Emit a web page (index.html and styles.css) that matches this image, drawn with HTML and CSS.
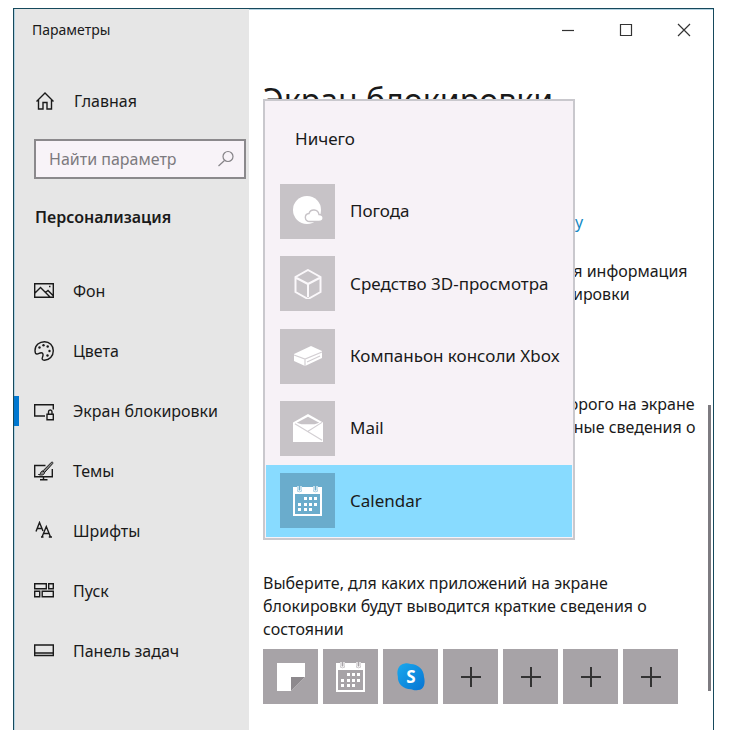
FILE: index.html
```html
<!DOCTYPE html>
<html lang="ru">
<head>
    <meta charset="UTF-8">
    <meta name="viewport" content="width=device-width, initial-scale=1.0">
    <title>Параметры</title>
    <link rel="stylesheet" href="styles.css">
</head>
<body>
    <div class="window">
        <aside class="sidebar">
            <div class="app-title">Параметры</div>

            <a class="home" href="#">
                <svg class="icon" viewBox="0 0 20 20"><path d="M1.500 10.500 10 2l8.500 8.500M3.500 9v9h4.500v-6.500h4V18h4.500V9"/></svg>
                Главная
            </a>

            <div class="search">
                <input type="text" aria-label="Найти параметр" placeholder="Найти параметр">
                <svg class="search-icon" viewBox="0 0 18 18"><circle cx="11" cy="6.500" r="5"/><path d="M7.500 10.500 1.500 16"/></svg>
            </div>

            <h2>Персонализация</h2>

            <nav class="menu">
                <a href="#">
                    <svg class="icon" viewBox="0 0 20 20"><path d="M.7 2.700h18.600v13.600H.7zM1 12l5.500-5.500 9.500 9.500M11.500 11.500l2.500-2 5 5"/><path d="M15 5.500h1.500"/></svg>
                    Фон
                </a>
                <a href="#">
                    <svg class="icon" viewBox="0 0 20 20"><path d="M1 9.500C1 4 5.500.7 10.500.7c5 0 8.800 4 8.800 9 0 5.500-4 9.500-8.800 9.500-2.500 0-2.700-1.500-2-3 .9-2 .8-4.500-1.200-4.500-2 0-2.500 1.300-4.300 1.300C1.500 13 1 11 1 9.500z"/><g class="dots"><circle cx="5.500" cy="6.500" r="1.200"/><circle cx="9.500" cy="4.200" r="1.200"/><circle cx="13.700" cy="5.500" r="1.200"/><circle cx="15.500" cy="10" r="1.200"/><circle cx="13.500" cy="14.500" r="1.200"/></g></svg>
                    Цвета
                </a>
                <a class="active" href="#">
                    <svg class="icon" viewBox="0 0 20 20"><path d="M11 15H.7V3.700h18.600V8.500M13 13.200h6.300v5.500H13zM14.500 13v-2.200c0-2.400 3.500-2.400 3.500 0V13"/></svg>
                    Экран блокировки
                </a>
                <a href="#">
                    <svg class="icon" viewBox="0 0 20 20"><path d="M11.500 4.500H.7v11.300h17.600V8M9.500 16v2.500M6 18.700h7.500"/><path class="brush" d="M17.500 1.200 9 9.800l1.600 1.700 8-8.800c.8-1-.2-2.200-1.100-1.500zM9 10c-2 0-2.500 1.500-2.500 2.700-.5.600-1.200.8-2 .8 2.500 1 6 .8 6-2z"/></svg>
                    Темы
                </a>
                <a href="#">
                    <svg class="icon" viewBox="0 0 20 20"><path d="M2 10.500 5.500 1.500 9 10M3.500 7.500h4M8 16l4.300-10.500L16.500 16M9.500 12.500h5.500M7 16h2.500M14.800 16H18"/></svg>
                    Шрифты
                </a>
                <a href="#">
                    <svg class="icon" viewBox="0 0 20 20"><path d="M.7 2.700h11.600v5H.7zM14.700 2.700h4.600v5h-4.600zM.7 10.200h5v5.500h-5zM8.200 10.200h11.100v5.500H8.200z"/></svg>
                    Пуск
                </a>
                <a href="#">
                    <svg class="icon" viewBox="0 0 20 20"><path d="M.7 4h18.600v10.500H.7zM.7 12h18.600"/></svg>
                    Панель задач
                </a>
            </nav>
        </aside>

        <main class="content">
            <div class="window-buttons">
                <button aria-label="Свернуть"><svg viewBox="0 0 14 14"><path d="M1 7.500h12"/></svg></button>
                <button aria-label="Развернуть"><svg viewBox="0 0 14 14"><path d="M1.500 1.500h11v11h-11z"/></svg></button>
                <button aria-label="Закрыть"><svg viewBox="0 0 14 14"><path d="m1 1 12 12M13 1 1 13"/></svg></button>
            </div>

            <div class="page">
                <h1>Экран блокировки</h1>
                <div class="notes">
                    <a class="link" href="#">фону</a>
                    <p class="hint">новая информация<br>блокировки</p>
                    <p class="detail">которого на экране<br>важные сведения о</p>
                </div>
                <p class="brief">Выберите, для каких приложений на экране блокировки будут выводится краткие сведения о состоянии</p>

                <div class="tiles">
                    <button class="tile" aria-label="Записки"><svg viewBox="0 0 30 30"><path class="solid" d="M1 1h28v14L15 29H1z"/><path class="fold" d="M15 15h14L15 29z"/></svg></button>
                    <button class="tile" aria-label="Календарь"><svg viewBox="0 0 30 30"><use href="#calendar"/></svg></button>
                    <button class="tile" aria-label="Skype">
                        <svg viewBox="0 0 30 30">
                            <defs><linearGradient id="sky" x1="0" y1="0" x2="1" y2="1"><stop offset="0" stop-color="#19a9ee"/><stop offset="1" stop-color="#0874d2"/></linearGradient></defs>
                            <path fill="url(#sky)" d="M9 1.500c2-.6 4 .2 5.500.5C22 2 28 7.500 28 15c1.500 5 .5 13-6 13-3 1-5-.5-7-.8C7 27 1.500 22 1.800 14.500.5 8 2.500 2.500 9 1.500z"/>
                            <text class="skype-letter" x="15" y="21">S</text>
                        </svg>
                    </button>
                    <button class="tile" aria-label="Добавить"><svg viewBox="0 0 30 30"><path class="plus" d="M5 15h20M15 5v20"/></svg></button>
                    <button class="tile" aria-label="Добавить"><svg viewBox="0 0 30 30"><path class="plus" d="M5 15h20M15 5v20"/></svg></button>
                    <button class="tile" aria-label="Добавить"><svg viewBox="0 0 30 30"><path class="plus" d="M5 15h20M15 5v20"/></svg></button>
                    <button class="tile" aria-label="Добавить"><svg viewBox="0 0 30 30"><path class="plus" d="M5 15h20M15 5v20"/></svg></button>
                </div>
            </div>

            <!-- App picker opened over the page -->
            <div class="picker" role="listbox" aria-label="Приложение">
                <button class="option none" role="option">Ничего</button>
                <button class="option" role="option">
                    <span class="app-icon"><svg viewBox="0 0 30 30"><circle class="solid" cx="14" cy="14" r="14"/><path class="cloud" d="M17 25.500c-6 0-6-7.500-1-8 1.500-5 9-4.500 10 1 5.500 0 5.500 7 0 7z"/></svg></span>
                    Погода
                </button>
                <button class="option" role="option">
                    <span class="app-icon"><svg viewBox="0 0 30 30"><path class="line" d="M15 1 27.500 8v15L15 30 2.500 23V8zM3.500 9 15 15l11.500-6M15 15v13"/></svg></span>
                    Средство 3D-просмотра
                </button>
                <button class="option" role="option">
                    <span class="app-icon"><svg viewBox="0 0 30 30"><path class="solid" d="M1 13 18 5l11 5v7l-17 8-11-5z"/><path class="seam" d="m1 14 11 4 17-7M12 18v7M14 21l13-6"/></svg></span>
                    Компаньон консоли Xbox
                </button>
                <button class="option" role="option">
                    <span class="app-icon"><svg viewBox="0 0 32 30"><path class="solid" d="M16 0 32 9v21H0V9z"/><path class="flap" d="M4 9.500 16 3l12 6.500-5 1.500H9z"/><path class="seam" d="m2 10.500 29 17.500M16 18.500 31 9"/></svg></span>
                    Mail
                </button>
                <button class="option selected" role="option" aria-selected="true">
                    <span class="app-icon">
                        <svg viewBox="0 0 30 30">
                            <g id="calendar">
                                <path class="solid" d="M0 1h4v3c0 3 5 3 5 0V1h11v3c0 3 5 3 5 0V1h4v29H0V1zm2 7v20h25V8z" fill-rule="evenodd"/>
                                <path class="rings" d="M5 0v4c0 1.500 3 1.500 3 0V0M21 0v4c0 1.500 3 1.500 3 0V0"/>
                                <path class="solid" d="M11 11h3v3h-3zM16 11h3v3h-3zM21 11h3v3h-3zM5 17h3v3H5zM11 17h3v3h-3zM16 17h3v3h-3zM21 17h3v3h-3zM5 22h3v3H5zM11 22h3v3h-3zM16 22h3v3h-3z"/>
                            </g>
                        </svg>
                    </span>
                    Calendar
                </button>
            </div>

            <div class="scrollbar"></div>
        </main>
    </div>
</body>
</html>
```
FILE: styles.css
```css
* {
    box-sizing: border-box;
}
body {
    margin: 0;
    padding: 8px 16px 0 13px;
    background-color: #fff;
    color: #1a1a1a;
    font-family: "Noto Sans", "Open Sans", sans-serif;
    font-size: 16px;
    line-height: 24px;
}
button {
    padding: 0;
    border: none;
    background: none;
    color: inherit;
    font: inherit;
}
a {
    color: inherit;
    text-decoration: none;
}
.window {
    display: flex;
    min-height: calc(100vh - 8px);
    border: 1px solid #16495c;
    border-bottom: none;
}

/* Left column */
.sidebar {
    flex: 0 0 235px;
    min-width: 0;
    border-left: 1px solid #b4d3e2;
    background-color: #e6e6e6;
}
.app-title {
    padding: 9px 17px;
    font-size: 14px;
}
.home {
    display: flex;
    align-items: center;
    gap: 19px;
    height: 40px;
    margin-top: 30px;
    padding-left: 20px;
}
.icon {
    width: 20px;
    height: 20px;
    fill: none;
    stroke: #1a1a1a;
    stroke-width: 1.4;
}
.icon .dots {
    fill: #1a1a1a;
    stroke: none;
}
.icon .brush {
    fill: #8a8a8a;
    stroke-width: 1;
}
.search {
    display: flex;
    align-items: center;
    height: 40px;
    margin: 18px 3px 0 19px;
    padding: 0 9px 0 13px;
    border: 2px solid #8b898c;
    background-color: #f8f3f8;
}
.search input {
    flex: 1;
    min-width: 0;
    padding: 0;
    border: none;
    outline: none;
    background: none;
    font: inherit;
}
.search input::placeholder {
    color: #7c7a7e;
    opacity: 1;
}
.search-icon {
    flex: none;
    width: 18px;
    height: 18px;
    fill: none;
    stroke: #858387;
    stroke-width: 1.2;
}
.sidebar h2 {
    margin: 26px 0 32px 20px;
    font-size: 16px;
    font-weight: 600;
}
.menu a {
    display: flex;
    align-items: center;
    gap: 19px;
    height: 60px;
    padding-left: 19px;
}
.menu .active {
    position: relative;
}
.menu .active::before {
    content: "";
    position: absolute;
    left: -1px;
    top: 15px;
    width: 5px;
    height: 30px;
    background-color: #0078d0;
}

/* Right column */
.content {
    position: relative;
    flex: 1;
    min-width: 0;
    border-top: 1px solid #b4d3e2;
}
.window-buttons {
    display: flex;
    justify-content: flex-end;
}
.window-buttons button {
    width: 58px;
    height: 40px;
}
.window-buttons svg {
    display: block;
    width: 14px;
    height: 14px;
    margin: 0 auto;
    fill: none;
    stroke: #333;
    stroke-width: 1.2;
}
.page {
    padding: 30px 14px 0;
}
h1 {
    margin: 0 0 90px;
    font-size: 32px;
    font-weight: 400;
    line-height: 40px;
}
/* Right part of the texts, the rest is under the picker */
.notes {
    margin-left: 281px;
    white-space: nowrap;
}
.link {
    display: block;
    color: #1389c4;
}
.page p {
    margin: 0;
    line-height: 23px;
}
.notes .hint {
    margin-top: 26px;
    margin-left: -8px;
}
.notes .detail {
    margin-top: 87px;
}
.page .brief {
    max-width: 410px;
    margin-top: 133px;
}
.tiles {
    display: flex;
    gap: 5px;
    margin-top: 8px;
}
.tile {
    display: flex;
    align-items: center;
    justify-content: center;
    width: 55px;
    height: 55px;
    background-color: #a7a3a7;
}
.tile svg,
.app-icon svg {
    width: 30px;
    height: 30px;
}
.solid {
    fill: #fff;
}
.fold {
    fill: #8d898d;
}
.plus {
    fill: none;
    stroke: #333;
    stroke-width: 2;
}
.skype-letter {
    fill: #fff;
    font-size: 17px;
    font-weight: 700;
    text-anchor: middle;
}

.picker {
    position: absolute;
    top: 89px;
    left: 14px;
    display: grid;
    grid-auto-rows: 1fr;
    width: 312px;
    height: 441px;
    padding: 2px 1px 1px;
    border: 2px solid #c9c8cd;
    background-color: #f7f2f7;
    font-size: 17px;
}
.option {
    display: flex;
    align-items: center;
    gap: 15px;
    padding-left: 14px;
    text-align: left;
    white-space: nowrap;
}
.option.none {
    padding-left: 29px;
}
.option.selected {
    background-color: #88dbff;
}
.app-icon {
    display: flex;
    align-items: center;
    justify-content: center;
    width: 55px;
    height: 55px;
    background-color: #c7c3c7;
}
.selected .app-icon {
    background-color: #6aaccc;
}
.app-icon .line {
    fill: none;
    stroke: #fbf8fb;
    stroke-width: 2;
}
.app-icon .flap {
    fill: #c7c3c7;
}
.app-icon .seam {
    fill: none;
    stroke: #d3cfd3;
    stroke-width: 1.2;
}
.app-icon .cloud {
    fill: #fff;
    stroke: #c7c3c7;
    stroke-width: 1.4;
}
.rings {
    fill: none;
    stroke: #fff;
    stroke-width: 1.2;
}
.scrollbar {
    position: absolute;
    top: 395px;
    right: 2px;
    width: 3px;
    height: 286px;
    background-color: #7d7b80;
}
```
